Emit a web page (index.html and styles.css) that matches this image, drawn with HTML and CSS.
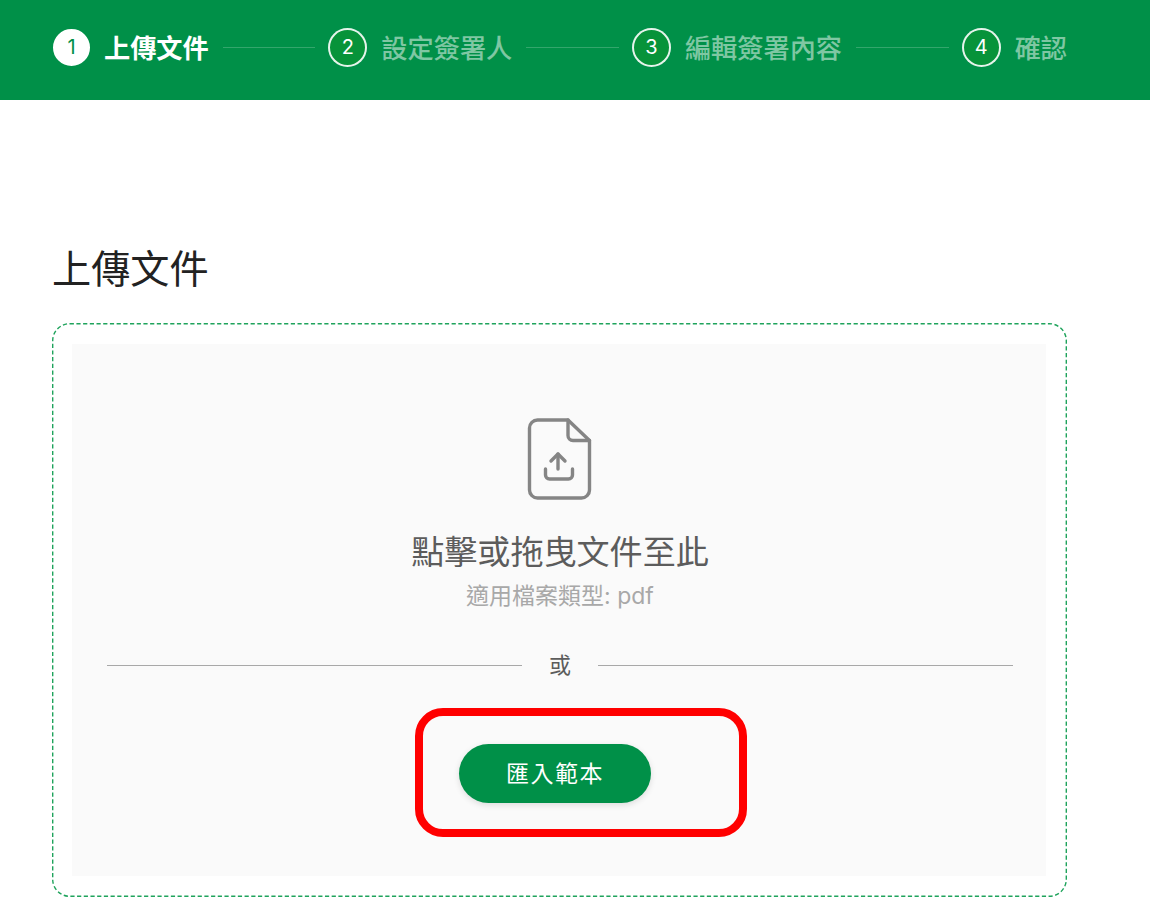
FILE: index.html
```html
<!DOCTYPE html>
<html lang="zh-Hant">
<head>
  <meta charset="utf-8">
  <title>上傳文件</title>
  <link rel="stylesheet" href="styles.css">
</head>
<body>
  <div class="stepbar">
    <div class="step active">
      <span class="step-num">1</span>
      <span class="step-label">上傳文件</span>
    </div>
    <div class="step-line"></div>
    <div class="step">
      <span class="step-num">2</span>
      <span class="step-label">設定簽署人</span>
    </div>
    <div class="step-line"></div>
    <div class="step">
      <span class="step-num">3</span>
      <span class="step-label">編輯簽署內容</span>
    </div>
    <div class="step-line"></div>
    <div class="step">
      <span class="step-num">4</span>
      <span class="step-label">確認</span>
    </div>
  </div>

  <div class="content">
    <h1 class="page-title">上傳文件</h1>

    <div class="dropzone">
      <svg class="dash-border" xmlns="http://www.w3.org/2000/svg" width="1015" height="574" fill="none">
        <rect x="0.7" y="0.7" width="1013.6" height="572.6" rx="17" stroke="#1fa35c" stroke-width="1.4" stroke-dasharray="4.2 2.5"/>
      </svg>
      <div class="dropzone-inner">
        <svg class="file-icon" xmlns="http://www.w3.org/2000/svg" width="66" height="82" viewBox="0 0 66 82" fill="none" stroke="currentColor" stroke-width="3.4" stroke-linejoin="round" stroke-linecap="round">
          <path d="M42 2H11.5a8 8 0 0 0-8 8v62a8 8 0 0 0 8 8h44a8 8 0 0 0 8-8V22.5z"/>
          <path d="M42 2v15.5a5 5 0 0 0 5 5h16.5"/>
          <path d="M32 36v15"/>
          <path d="M25 43l7-7 7 7"/>
          <path d="M19.5 51v6a4 4 0 0 0 4 4h19a4 4 0 0 0 4-4v-6"/>
        </svg>
        <div class="drop-title">點擊或拖曳文件至此</div>
        <div class="drop-hint">適用檔案類型: pdf</div>
        <div class="divider"><span>或</span></div>
        <div class="import-row">
          <button class="import-button">匯入範本</button>
        </div>
      </div>
    </div>
  </div>

  <!-- annotation drawn over the screenshot -->
  <div class="highlight-box"></div>
</body>
</html>
```

FILE: styles.css
```css
:root {
  --green: #009048;
  --text-color: #222;
  --grey-text: #5c5c5c;
  --hint-text: #a8a8a8;
}

html, body {
  height: 918px;
  overflow: hidden;
}

body {
  margin: 0;
  position: relative;
  font-family: "Noto Sans CJK TC", Lato, sans-serif;
  background: #fff;
  color: var(--text-color);
}

.stepbar {
  display: flex;
  align-items: center;
  height: 100px;
  padding: 0 83px 6px 52px;
  box-sizing: border-box;
  background: var(--green);
}

.step {
  display: flex;
  align-items: center;
  gap: 14px;
}

.step-num {
  display: flex;
  align-items: center;
  justify-content: center;
  width: 39px;
  height: 39px;
  box-sizing: border-box;
  border: 2px solid rgba(255, 255, 255, 0.9);
  border-radius: 50%;
  background: #07933a;
  color: #fff;
  font-family: Inter, sans-serif;
  font-size: 20px;
}

.step-label {
  margin-top: -1px;
  font-size: 26.2px;
  font-weight: 500;
  line-height: 38px;
  color: rgba(255, 255, 255, 0.5);
}

.step.active .step-num {
  width: 37px;
  height: 37px;
  margin-left: 1px;
  background: #fff;
  color: var(--green);
  border-color: #fff;
}

.step.active .step-label {
  color: #fff;
  font-weight: 700;
}

.step-line {
  flex: 1;
  height: 1px;
  margin: 0 13px 0 14px;
  background: rgba(255, 255, 255, 0.2);
}

.content {
  padding: 0 83px 0 52px;
}

.page-title {
  margin: 140px 0 30px;
  font-size: 39.2px;
  font-weight: 400;
  line-height: 53px;
}

.dropzone {
  position: relative;
  height: 574px;
  box-sizing: border-box;
  padding: 21px 21px 21px 20px;
}

.dash-border {
  position: absolute;
  left: 0;
  top: 0;
}

.dropzone-inner {
  display: flex;
  flex-direction: column;
  align-items: center;
  height: 532px;
  padding: 74px 33px 0 35px;
  box-sizing: border-box;
  background: #fafafa;
}

.file-icon {
  margin-right: 2px;
  color: #858585;
}

.drop-title {
  margin-top: 27px;
  font-size: 33.1px;
  line-height: 46px;
  color: var(--grey-text);
}

.drop-hint {
  margin-top: 6px;
  font-family: Inter, "Noto Sans CJK TC", sans-serif;
  font-size: 23px;
  line-height: 34px;
  color: var(--hint-text);
}

.divider {
  display: flex;
  align-items: center;
  width: 100%;
  margin-top: 34px;
  font-size: 22px;
  line-height: 32px;
  color: var(--grey-text);
}

.divider::before,
.divider::after {
  content: "";
  flex: 1;
  height: 1px;
  margin-top: 4px;
  background: #a8a8a8;
}

.divider span {
  padding: 0 27px;
}

.import-row {
  width: 100%;
  margin-top: 65px;
  padding-left: 352px;
  box-sizing: border-box;
}

.import-button {
  width: 192px;
  height: 59px;
  padding: 0 0 3px;
  border: none;
  border-radius: 30px;
  background: var(--green);
  color: #fff;
  font-family: inherit;
  font-size: 23px;
  letter-spacing: 1.5px;
  box-shadow: 0 2px 6px rgba(0, 0, 0, 0.12);
}

.highlight-box {
  position: absolute;
  left: 415px;
  top: 708px;
  width: 332px;
  height: 129px;
  box-sizing: border-box;
  border: 8px solid #ff0000;
  border-radius: 28px;
}
```
